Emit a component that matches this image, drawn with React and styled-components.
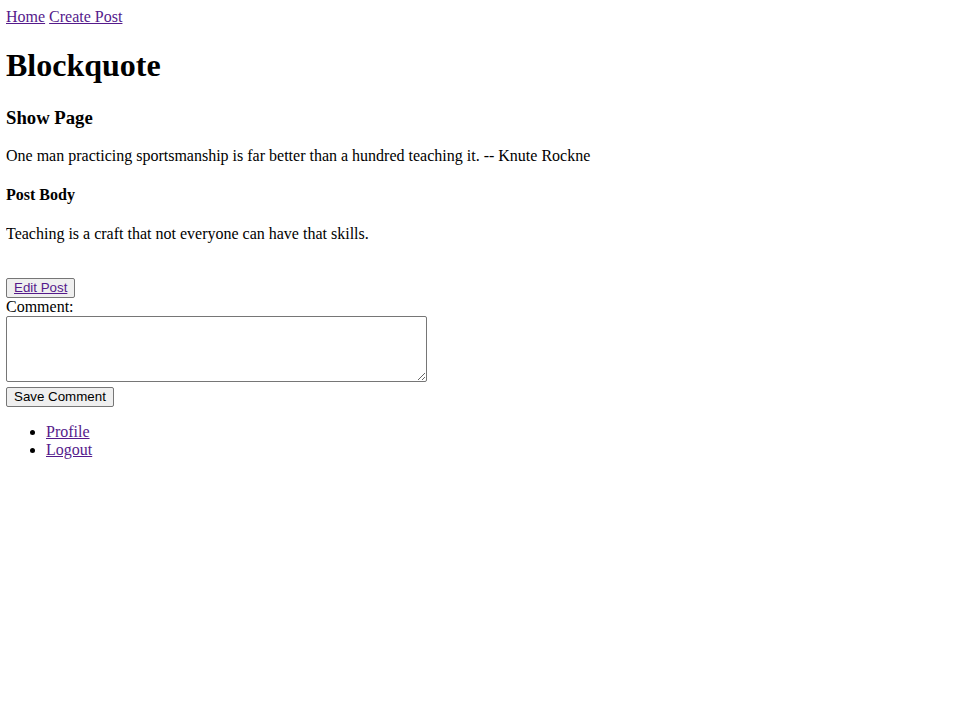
import React from "react";
import styled, { createGlobalStyle } from "styled-components";

const GlobalStyle = createGlobalStyle`
  body {
    margin: 8px 6px;
    font-family: "Liberation Serif", "Times New Roman", serif;
    font-size: 16px;
    color: #000;
    background: #fff;
  }
`;

const NavLink = styled.a`
  color: #551a8b;
  text-decoration: underline;
  cursor: pointer;
`;

const Title = styled.h1`
  font-size: 32px;
  font-weight: bold;
  margin: 21px 0 23px;
`;

const SubTitle = styled.h3`
  font-size: 18.72px;
  font-weight: bold;
  margin: 18px 0 18px;
`;

const Text = styled.p`
  margin: 16px 0;
`;

const SectionTitle = styled.h4`
  font-size: 16px;
  font-weight: bold;
  margin: 21px 0 21px;
`;

const Spacer = styled.div`
  height: 19px;
`;

const Button = styled.button`
  font-family: "Liberation Sans", Arial, sans-serif;
  font-size: 13.33px;
  padding: 1px 7px 2px;
  margin: 0;
  border: 1px solid #767676;
  border-radius: 2px;
  background: #efefef;
  color: #000;
  line-height: normal;
  a {
    color: #551a8b;
    text-decoration: underline;
  }
`;

const CommentBox = styled.textarea`
  display: block;
  width: 421px;
  height: 66px;
  box-sizing: border-box;
  margin: 0 0 5px;
  border: 1px solid #767676;
  border-radius: 2px;
  padding: 2px;
  font-family: "Liberation Mono", monospace;
  font-size: 13.33px;
`;

const Menu = styled.ul`
  margin: 16px 0;
  padding-left: 40px;
  list-style: disc;
`;

export default function App() {
  return (
    <>
      <GlobalStyle />
      <nav>
        <NavLink href="#">Home</NavLink> <NavLink href="#">Create Post</NavLink>
      </nav>
      <Title>Blockquote</Title>
      <SubTitle>Show Page</SubTitle>
      <Text>
        One man practicing sportsmanship is far better than a hundred teaching it. -- Knute Rockne
      </Text>
      <SectionTitle>Post Body</SectionTitle>
      <Text>Teaching is a craft that not everyone can have that skills.</Text>
      <Spacer />
      <Button>
        <a href="#">Edit Post</a>
      </Button>
      <form onSubmit={(e) => e.preventDefault()}>
        <label>Comment:</label>
        <CommentBox />
        <Button type="submit">Save Comment</Button>
      </form>
      <Menu>
        <li>
          <NavLink href="#">Profile</NavLink>
        </li>
        <li>
          <NavLink href="#">Logout</NavLink>
        </li>
      </Menu>
    </>
  );
}
